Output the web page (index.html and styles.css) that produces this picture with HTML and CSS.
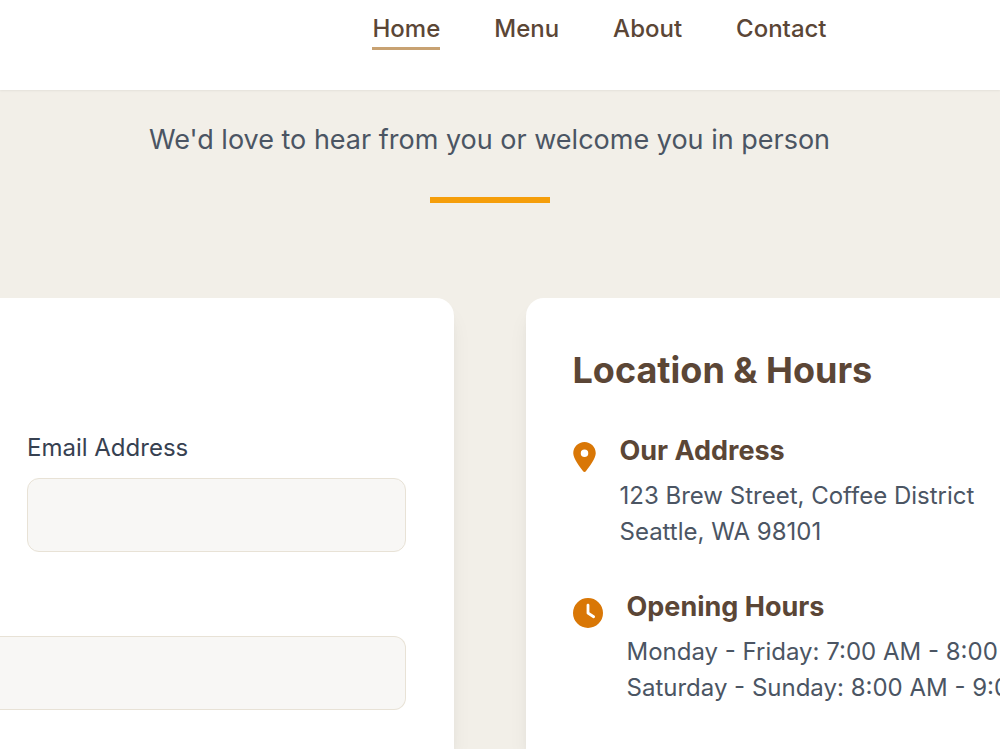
FILE: index.html
```html
<!DOCTYPE html>
<html lang="en">
<head>
<meta charset="utf-8">
<meta name="viewport" content="width=device-width, initial-scale=1">
<title>Contact</title>
<link rel="stylesheet" href="styles.css">
</head>
<body>
<header class="site-header">
  <nav class="nav" aria-label="Main">
    <a class="nav-link nav-link-active" href="#home">Home</a>
    <a class="nav-link" href="#menu">Menu</a>
    <a class="nav-link" href="#about">About</a>
    <a class="nav-link" href="#contact">Contact</a>
  </nav>
</header>
<main class="contact">
  <div class="intro">
    <p class="intro-text">We'd love to hear from you or welcome you in person</p>
    <div class="intro-rule"></div>
  </div>
  <div class="cards">
    <form class="card card-form">
      <div class="field field-email">
        <label class="label" for="email">Email Address</label>
        <input class="input" id="email" type="email">
      </div>
      <div class="field field-subject">
        <input class="input input-wide" type="text" aria-label="Subject">
      </div>
    </form>
    <section class="card card-info">
      <h2 class="card-title">Location &amp; Hours</h2>
      <div class="info">
        <svg class="icon icon-pin" viewBox="0 0 384 512" aria-hidden="true"><path fill="currentColor" d="M215.700 499.200C267 435 384 279.400 384 192C384 86 298 0 192 0S0 86 0 192c0 87.400 117 243 168.300 307.200c12.300 15.300 35.100 15.300 47.400 0zM192 128a64 64 0 1 1 0 128 64 64 0 1 1 0-128z"/></svg>
        <div>
          <h3 class="info-title">Our Address</h3>
          <p class="info-text">123 Brew Street, Coffee District<br>Seattle, WA 98101</p>
        </div>
      </div>
      <div class="info">
        <svg class="icon icon-clock" viewBox="0 0 512 512" aria-hidden="true"><path fill="currentColor" d="M256 0a256 256 0 1 1 0 512A256 256 0 1 1 256 0zM232 120V256c0 8 4 15.500 10.700 20l96 64c11 7.400 25.900 4.400 33.300-6.700s4.400-25.900-6.700-33.300L280 243.200V120c0-13.300-10.700-24-24-24s-24 10.700-24 24z"/></svg>
        <div>
          <h3 class="info-title">Opening Hours</h3>
          <p class="info-text">Monday - Friday: 7:00 AM - 8:00 PM<br>Saturday - Sunday: 8:00 AM - 9:00 PM</p>
        </div>
      </div>
    </section>
  </div>
</main>
</body>
</html>
```
FILE: styles.css
```css
* {
  box-sizing: border-box;
}

body {
  margin: 0;
  min-height: 100vh;
  display: flex;
  flex-direction: column;
  overflow: hidden;
  background: #f2efe8;
  color: #4b5563;
  font-family: Inter, "Liberation Sans", sans-serif;
  font-size: 24px;
  line-height: 36px;
}

h2, h3, p {
  margin: 0;
}

.site-header {
  position: relative;
  padding: 11px 0 40px 199px;
  background: #fff;
  box-shadow: 0 1px 2px rgba(0, 0, 0, 0.06);
}

.nav {
  display: flex;
  justify-content: center;
  gap: 54px;
}

.nav-link {
  border-bottom: 3px solid transparent;
  color: #5b4636;
  font-weight: 500;
  text-decoration: none;
}

.nav-link-active {
  border-bottom-color: #c8a272;
}

.contact {
  flex: 1;
  display: flex;
  flex-direction: column;
  padding-right: 21px;
}

.intro {
  display: flex;
  flex-direction: column;
  align-items: center;
  gap: 36px;
  padding: 29px 0 95px;
}

.intro-text {
  font-size: 27px;
  line-height: 42px;
}

.intro-rule {
  width: 120px;
  height: 6px;
  background: #f59e0b;
}

.cards {
  flex: 1;
  display: grid;
  grid-template-columns: 1fr 1fr;
  gap: 72px;
}

.card {
  min-width: 0;
  background: #fff;
  box-shadow: 0 15px 22px -4px rgba(0, 0, 0, 0.08), 0 6px 9px -3px rgba(0, 0, 0, 0.04);
}

.card-form {
  display: flex;
  flex-direction: column;
  gap: 84px;
  padding: 132px 48px 0 0;
  border-radius: 0 18px 0 0;
}

.card-info {
  margin-right: -21px;
  padding: 48px 0 0 47px;
  border-radius: 18px 0 0 0;
}

.field {
  display: flex;
  flex-direction: column;
  gap: 12px;
}

.field-email {
  padding-left: 27px;
}

.label {
  color: #374151;
}

.input {
  width: 100%;
  height: 74px;
  padding: 18px;
  border: 1px solid #e8e2d6;
  border-radius: 12px;
  background: #f8f7f5;
  font: inherit;
}

.input-wide {
  border-left: 0;
  border-radius: 0 12px 12px 0;
}

.card-title {
  margin-bottom: 36px;
  color: #5b4636;
  font-size: 36px;
  line-height: 48px;
}

.info {
  display: flex;
  align-items: flex-start;
  gap: 24px;
  margin-bottom: 36px;
}

.icon {
  flex: none;
  height: 30px;
  margin-top: 12px;
  color: #d97706;
}

.icon-pin {
  width: 23px;
}

.icon-clock {
  width: 30px;
}

.info-title {
  margin-bottom: 6px;
  color: #5b4636;
  font-size: 27px;
  line-height: 42px;
}

.info-text {
  white-space: nowrap;
}
```
